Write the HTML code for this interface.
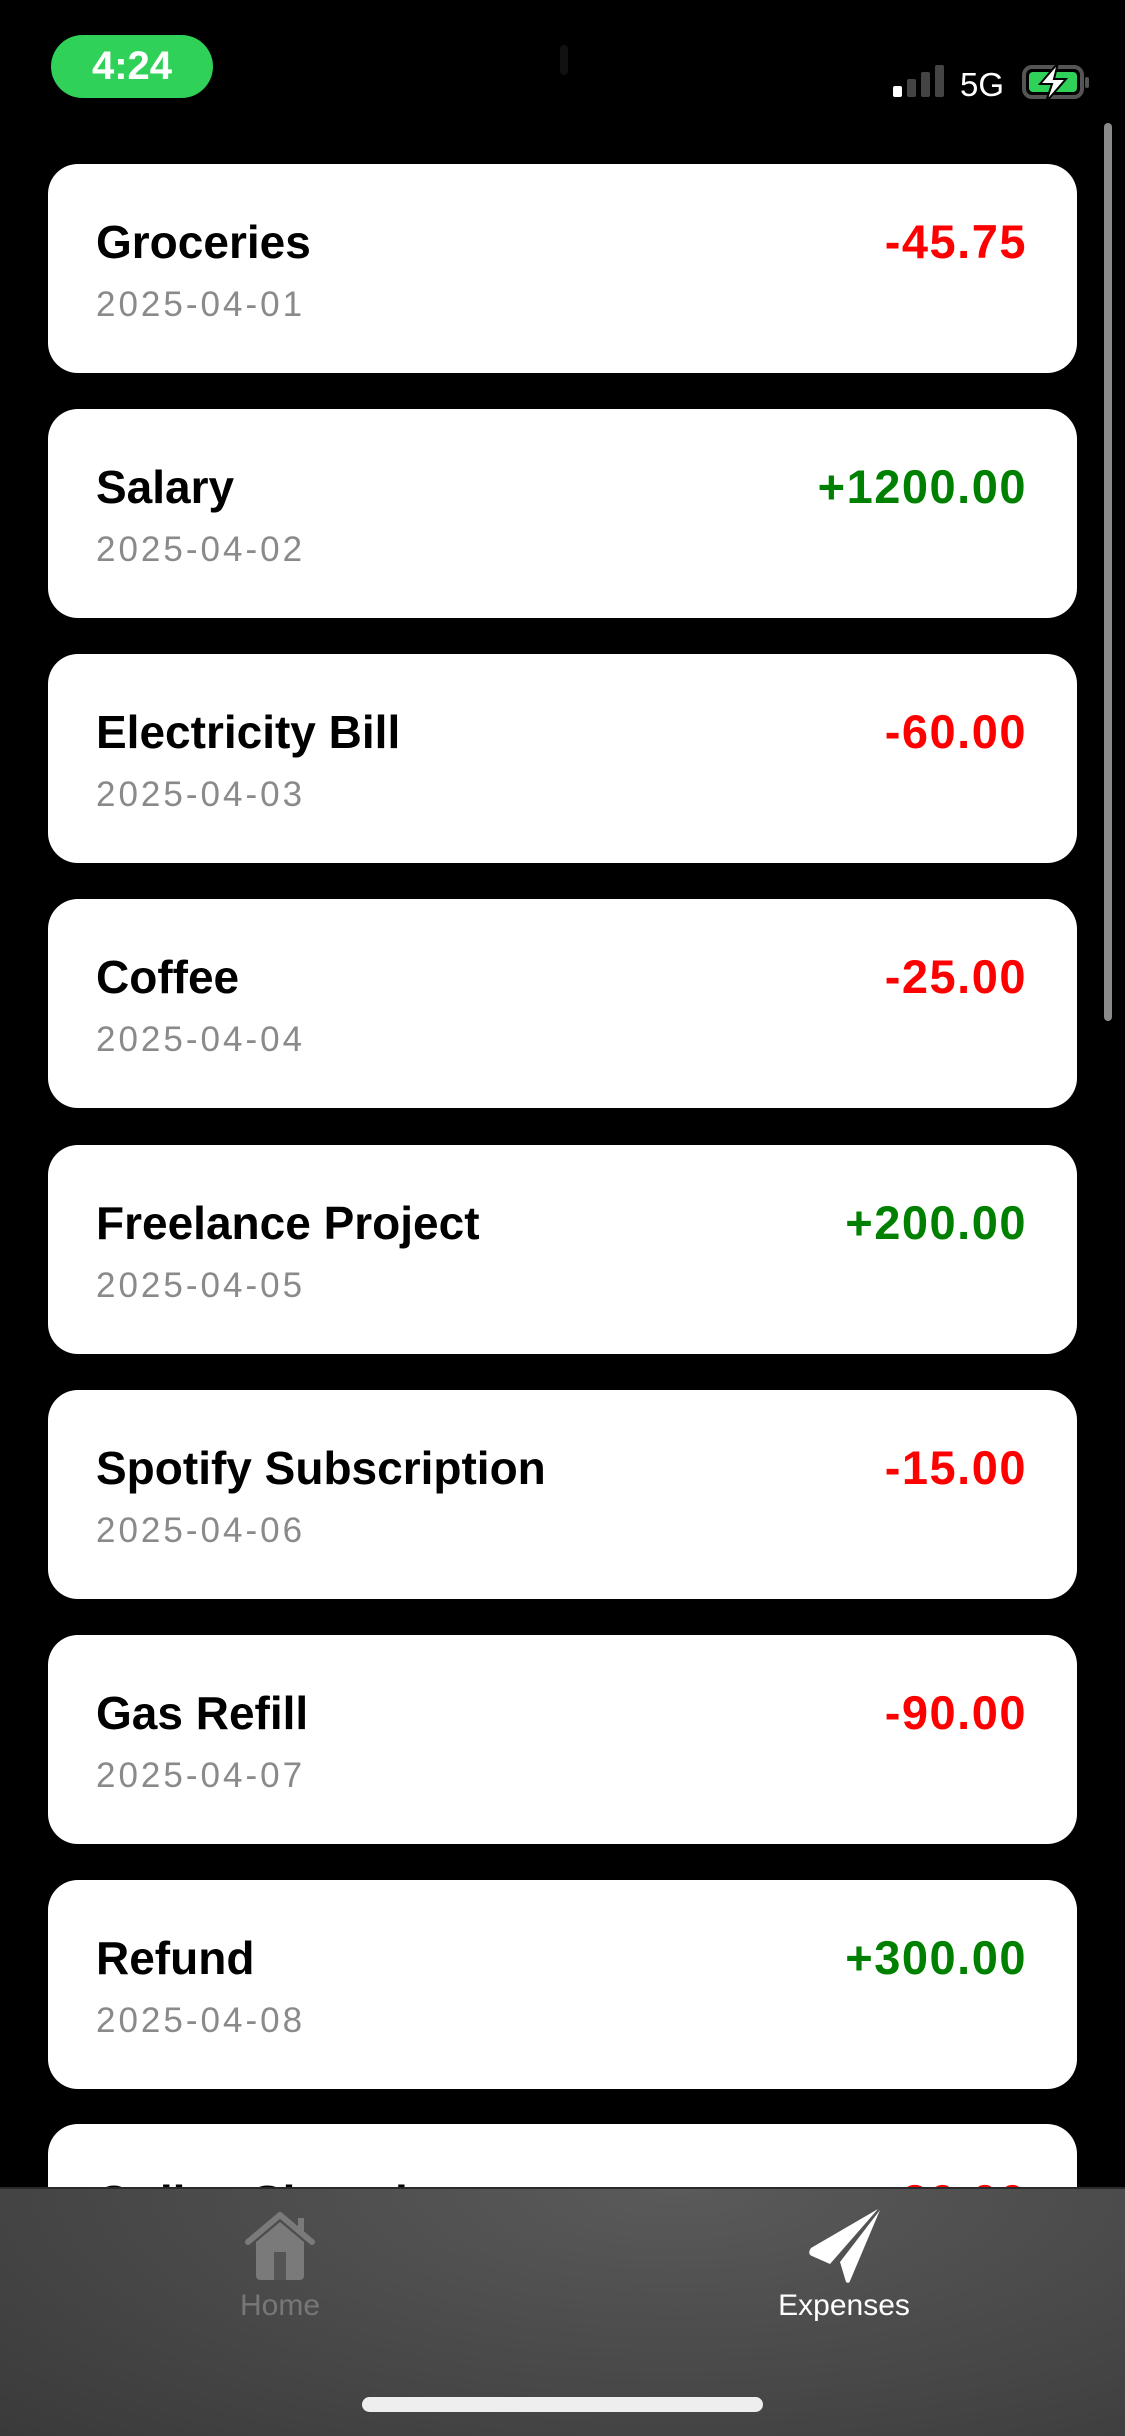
<!DOCTYPE html>
<html><head><meta charset="utf-8"><style>
*{margin:0;padding:0;box-sizing:border-box}
html,body{width:1125px;height:2436px;background:#000;overflow:hidden;font-family:"Liberation Sans",sans-serif}
.pill{position:absolute;left:51px;top:35px;width:162px;height:63px;border-radius:32px;background:#30d158;color:#fff;font-size:40px;font-weight:bold;text-align:center;line-height:63px}
.card{position:absolute;left:48px;width:1029px;height:209px;background:#fff;border-radius:30px}
.t{position:absolute;left:48px;top:50px;font-size:46px;font-weight:bold;color:#000;line-height:56px}
.d{position:absolute;left:48px;top:121px;font-size:35px;color:#8a8a8a;line-height:40px;letter-spacing:3px}
.a{position:absolute;right:50px;top:50px;font-size:47px;line-height:56px;font-weight:bold;letter-spacing:1.5px}
.r{color:#ff0000}.g{color:#008000}
.tab{position:absolute;left:0;top:2187px;width:1125px;height:249px;background:radial-gradient(ellipse at 60% 0%,#5a5a5a,#474747 60%,#3a3a3a);border-top:2px solid #2a2a2a}
.lbl{position:absolute;top:2289px;font-size:30px;width:300px;text-align:center}
</style></head><body>
<div class="pill">4:24</div>
<div style="position:absolute;left:560px;top:45px;width:8px;height:30px;background:#111;border-radius:4px"></div>
<svg style="position:absolute;left:890px;top:62px" width="205" height="40">
<rect x="3" y="24" width="9" height="11" rx="2" fill="#fff"/>
<rect x="17" y="17" width="9" height="18" rx="2" fill="#444"/>
<rect x="31" y="10" width="9" height="25" rx="2" fill="#444"/>
<rect x="45" y="3" width="9" height="32" rx="2" fill="#444"/>
<text x="70" y="34" font-size="33" fill="#fff" font-family="Liberation Sans">5G</text>
<rect x="134" y="5" width="58" height="30" rx="8" fill="none" stroke="#555" stroke-width="4"/>
<rect x="139" y="10" width="48" height="20" rx="4" fill="#30d158"/>
<rect x="195" y="15" width="4" height="11" rx="2" fill="#555"/>
<path d="M168 1 L150 22 L162 22 L156 40 L176 17 L164 17 Z" fill="#fff" stroke="#000" stroke-width="2"/>
</svg>
<div style="position:absolute;left:1104px;top:123px;width:8px;height:898px;border-radius:4px;background:#8a8a8a"></div>

<div class="card" style="top:164px"><div class="t">Groceries</div><div class="d">2025-04-01</div><div class="a r">-45.75</div></div>
<div class="card" style="top:409px"><div class="t">Salary</div><div class="d">2025-04-02</div><div class="a g">+1200.00</div></div>
<div class="card" style="top:654px"><div class="t">Electricity Bill</div><div class="d">2025-04-03</div><div class="a r">-60.00</div></div>
<div class="card" style="top:899px"><div class="t">Coffee</div><div class="d">2025-04-04</div><div class="a r">-25.00</div></div>
<div class="card" style="top:1145px"><div class="t">Freelance Project</div><div class="d">2025-04-05</div><div class="a g">+200.00</div></div>
<div class="card" style="top:1390px"><div class="t">Spotify Subscription</div><div class="d">2025-04-06</div><div class="a r">-15.00</div></div>
<div class="card" style="top:1635px"><div class="t">Gas Refill</div><div class="d">2025-04-07</div><div class="a r">-90.00</div></div>
<div class="card" style="top:1880px"><div class="t">Refund</div><div class="d">2025-04-08</div><div class="a g">+300.00</div></div>
<div class="card" style="top:2124px"><div class="t">Online Shopping</div><div class="d">2025-04-09</div><div class="a r">-30.00</div></div>

<div class="tab"></div>
<svg style="position:absolute;left:244px;top:2212px" width="72" height="70" viewBox="0 0 72 70">
<path d="M4 30 L36 3 L68 30" fill="none" stroke="#7a7a7a" stroke-width="6" stroke-linecap="round" stroke-linejoin="round"/>
<rect x="54" y="6" width="6" height="16" fill="#7a7a7a"/>
<path d="M12 30 L36 10 L60 30 V64 a4 4 0 0 1 -4 4 H16 a4 4 0 0 1 -4 -4 Z" fill="#7a7a7a"/>
<rect x="30" y="40" width="12" height="28" fill="#555"/>
</svg>
<svg style="position:absolute;left:804px;top:2208px" width="80" height="76" viewBox="0 0 80 76">
<path d="M74 1 L7 40 Q3 46 8 48 L26 56 Z" fill="#fff"/>
<path d="M76 2 L36 54 L42 74 Q45 76 46 73 Z" fill="#fff"/>
</svg>
<div class="lbl" style="left:130px;color:#777">Home</div>
<div class="lbl" style="left:694px;color:#fff">Expenses</div>
<div style="position:absolute;left:362px;top:2397px;width:401px;height:15px;border-radius:8px;background:#eee"></div>
</body></html>
